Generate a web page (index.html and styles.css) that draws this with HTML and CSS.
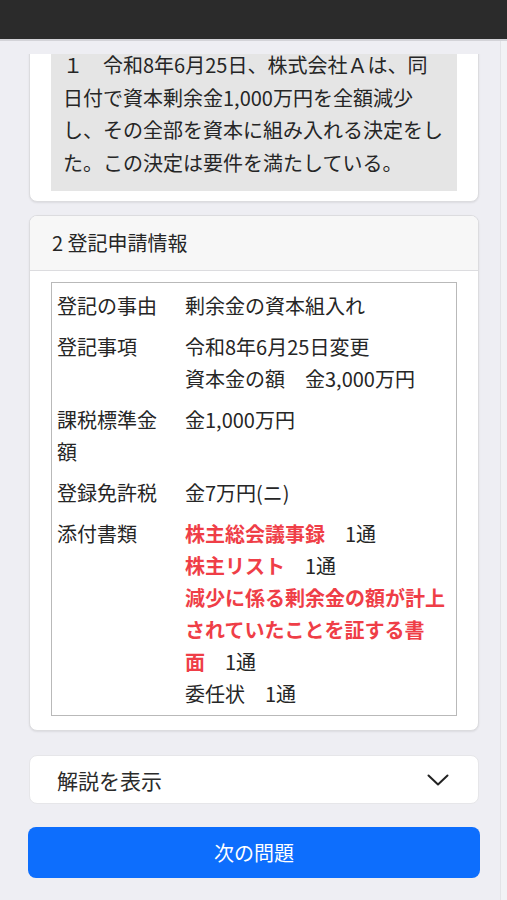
FILE: index.html
```html
<!DOCTYPE html>
<html lang="ja">
<head>
<meta charset="utf-8">
<title>登記申請情報</title>
<link rel="stylesheet" href="styles.css">
</head>
<body>
<header class="topbar"></header>
<div class="page">
  <main class="scroller">
    <section class="card card-question">
      <div class="question-box">
        １　令和8年6月25日、株式会社Ａは、同<br>日付で資本剰余金1,000万円を全額減少<br>し、その全部を資本に組み入れる決定をし<br>た。この決定は要件を満たしている。
      </div>
    </section>

    <section class="card card-info">
      <div class="card-header">2 登記申請情報</div>
      <div class="card-body">
        <div class="info-table">
          <div class="row">
            <div class="label">登記の事由</div>
            <div class="value">剰余金の資本組入れ</div>
          </div>
          <div class="row">
            <div class="label">登記事項</div>
            <div class="value">令和8年6月25日変更<br>資本金の額　金3,000万円</div>
          </div>
          <div class="row">
            <div class="label">課税標準金額</div>
            <div class="value">金1,000万円</div>
          </div>
          <div class="row">
            <div class="label">登録免許税</div>
            <div class="value">金7万円(ニ)</div>
          </div>
          <div class="row">
            <div class="label">添付書類</div>
            <div class="value">
              <div><span class="hl">株主総会議事録</span>　1通</div>
              <div><span class="hl">株主リスト</span>　1通</div>
              <div><span class="hl">減少に係る剰余金の額が計上<br>されていたことを証する書<br>面</span>　1通</div>
              <div>委任状　1通</div>
            </div>
          </div>
        </div>
      </div>
    </section>

    <section class="card card-toggle">
      <span class="toggle-label">解説を表示</span>
      <svg class="chevron" width="22" height="12" viewBox="0 0 22 12" aria-hidden="true">
        <polyline points="1.5,1.5 11,10.5 20.5,1.5" fill="none" stroke="#222" stroke-width="2" stroke-linecap="round" stroke-linejoin="round"/>
      </svg>
    </section>

    <button class="next-btn" type="button">次の問題</button>
  </main>
  <div class="scroll-track"></div>
</div>
</body>
</html>
```

FILE: styles.css
```css
* {
  box-sizing: border-box;
}

html, body {
  margin: 0;
  padding: 0;
}

body {
  background: #eeeef3;
  font-family: "Noto Sans CJK JP", "Noto Sans", sans-serif;
  color: #262626;
  font-size: 20px;
  width: 507px;
  height: 900px;
  overflow: hidden;
}

.topbar {
  height: 41px;
  background: #2b2b2b;
  border-bottom: 2px solid #d3d3d8;
}

.page {
  display: flex;
  height: 859px;
}

.scroller {
  flex: 1;
  margin-top: 13px;
  padding: 0 21px 0 29px;
  overflow: hidden;
  display: flex;
  flex-direction: column;
}

.scroll-track {
  width: 7px;
  background: #f2f2f5;
  border-left: 1px solid #e3e3e7;
}

.card {
  background: #fff;
  border: 1px solid #dcdcdf;
  border-radius: 8px;
  box-shadow: 0 1px 2px rgba(0, 0, 0, 0.08);
  width: 450px;
  flex-shrink: 0;
}

.card-question {
  margin-top: -28px;
  padding: 10px 21px 10px;
}

.question-box {
  background: #e5e5e5;
  padding: 12px 12px;
  line-height: 32.5px;
  font-size: 20px;
  white-space: nowrap;
}

.card-info {
  margin-top: 13px;
  overflow: hidden;
}

.card-header {
  background: #f7f7f7;
  border-bottom: 1px solid #dcdcdf;
  padding: 12px 22px;
  line-height: 30px;
  font-size: 20px;
}

.card-body {
  padding: 11px 21px 14px;
}

.info-table {
  border: 1px solid #b9b9b9;
  padding-top: 2px;
  padding-bottom: 1px;
}

.row {
  display: grid;
  grid-template-columns: 133px 1fr;
  padding: 4.5px 0;
  line-height: 32px;
}

.label {
  padding: 0 12px 0 5px;
}

.value {
  padding: 0;
}

.hl {
  color: #ef3e47;
  font-weight: 700;
}

.card-toggle {
  margin-top: 24px;
  height: 49px;
  display: flex;
  align-items: center;
  justify-content: space-between;
  padding: 0 29px 0 27px;
  border-color: #e6e6e9;
  box-shadow: none;
}

.toggle-label {
  font-size: 21px;
  line-height: 30px;
  color: #2a2a2a;
}

.chevron {
  display: block;
}

.next-btn {
  margin: 23px 0 0 -1px;
  width: 452px;
  height: 51px;
  flex-shrink: 0;
  background: #0d6efd;
  color: #fff;
  border: none;
  border-radius: 8px;
  font-family: "Noto Sans CJK JP", "Noto Sans", sans-serif;
  font-size: 20px;
  padding: 0;
}
```
